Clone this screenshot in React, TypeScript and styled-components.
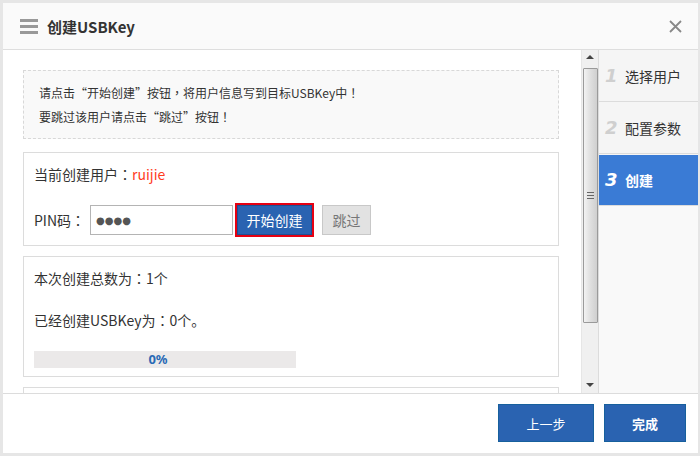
import React from "react";
import styled, { createGlobalStyle } from "styled-components";

const GlobalStyle = createGlobalStyle`
  html, body { margin: 0; padding: 0; background: #e6e6e6; }
  body { font-family: "Noto Sans CJK SC", "Microsoft YaHei", "Noto Sans", sans-serif; }
  * { box-sizing: border-box; }
`;

const Page = styled.div`
  width: 700px;
  height: 456px;
  padding: 3px 2px 3px 3px;
`;

const Dialog = styled.div`
  width: 100%;
  height: 100%;
  background: #fff;
  display: flex;
  flex-direction: column;
`;

const Header = styled.div`
  height: 47px;
  flex: none;
  background: #fafafa;
  border-bottom: 1px solid #dedede;
  display: flex;
  align-items: center;
  padding: 0 16px 0 17px;
`;

const Title = styled.div`
  margin-left: 9px;
  font-size: 15px;
  font-weight: 700;
  color: #333;
  flex: 1;
`;

const Body = styled.div`
  flex: 1;
  display: flex;
  min-height: 0;
`;

const Pane = styled.div`
  flex: 1;
  overflow: hidden;
  padding: 20px 22px 0 20px;
  display: flex;
  flex-direction: column;
`;

const Hint = styled.div`
  background: #f9f9f9;
  border: 1px dashed #d8d8d8;
  padding: 10px 15px 9px;
  font-size: 12px;
  line-height: 24px;
  color: #333;
  margin-bottom: 13px;
`;

/* centred full-width punctuation, as in the reference */
const Punct = styled.span`
  font-family: "Noto Sans CJK TC", "Noto Sans CJK SC", sans-serif;
`;

const Section = styled.div<{ $pt: number; $pb: number }>`
  border: 1px solid #dcdcdc;
  background: #fff;
  padding: ${(p) => p.$pt}px 10px ${(p) => p.$pb}px;
  margin-bottom: 10px;
  flex: none;
  font-size: 14px;
  color: #333;
`;

const Line = styled.div<{ $mt?: number }>`
  height: 20px;
  line-height: 20px;
  margin-top: ${(p) => p.$mt ?? 0}px;
`;

const Red = styled.span`
  color: #ff3c1e;
`;

const PinRow = styled.div`
  margin-top: 19px;
  display: flex;
  align-items: center;
  height: 34px;
`;

const PinLabel = styled.span`
  width: 56px;
`;

const PinInput = styled.div`
  width: 143px;
  height: 30px;
  border: 1px solid #b4b4b4;
  background: #fff;
  display: flex;
  align-items: center;
  padding-left: 5px;
  color: #555;
  font-size: 10px;
  letter-spacing: 0px;
  font-family: "DejaVu Sans", sans-serif;
`;

const StartBtn = styled.div`
  margin-left: 2px;
  width: 79px;
  height: 34px;
  border: 2px solid #e60012;
  background: #2a63b1;
  box-shadow: inset 0 0 0 1px #1d4f93;
  color: #fff;
  font-size: 14px;
  display: flex;
  align-items: center;
  justify-content: center;
`;

const SkipBtn = styled.div`
  margin-left: 8px;
  width: 49px;
  height: 30px;
  border: 1px solid #c8c8c8;
  background: #e2e2e2;
  color: #777;
  font-size: 14px;
  display: flex;
  align-items: center;
  justify-content: center;
`;

const Progress = styled.div`
  margin-top: 21px;
  width: 262px;
  height: 17px;
  padding-right: 14px;
  background: #ebe9e9;
  color: #2a6ab5;
  font-weight: 700;
  font-size: 13px;
  line-height: 17px;
  text-align: center;
  font-family: "Noto Sans", sans-serif;
`;

const Scrollbar = styled.div`
  width: 17px;
  flex: none;
  background: #f0f0f0;
  border-left: 1px solid #e6e6e6;
  display: flex;
  flex-direction: column;
  align-items: center;
  padding-top: 5px;
`;

const Arrow = styled.div<{ $down?: boolean }>`
  width: 0;
  height: 0;
  border-left: 4px solid transparent;
  border-right: 4px solid transparent;
  ${(p) =>
    p.$down
      ? "border-top: 4px solid #444; margin-top: auto; margin-bottom: 6px;"
      : "border-bottom: 4px solid #444; margin-bottom: 9px;"}
`;

const Thumb = styled.div`
  width: 15px;
  height: 255px;
  border: 1px solid #9a9a9a;
  border-radius: 1px;
  background: linear-gradient(to right, #f2f2f2 0%, #e2e2e2 40%, #cfcfcf 100%);
  display: flex;
  align-items: center;
  justify-content: center;
`;

const Grip = styled.div`
  width: 7px;
  height: 7px;
  background: repeating-linear-gradient(
    to bottom,
    #666 0px,
    #666 1px,
    transparent 1px,
    transparent 3px
  );
`;

const Steps = styled.div`
  width: 100px;
  flex: none;
  border-left: 1px solid #dcdcdc;
  background: #f9f9f9;
  display: flex;
  flex-direction: column;
`;

const Step = styled.div<{ $active?: boolean }>`
  height: 52px;
  border-bottom: 1px solid #dcdcdc;
  background: ${(p) => (p.$active ? "#3a7bd5" : "#f5f5f5")};
  box-shadow: ${(p) => (p.$active ? "inset 0 1px 0 #f5f5f5" : "none")};
  display: flex;
  align-items: center;
  padding-left: 6px;
  color: ${(p) => (p.$active ? "#fff" : "#333")};
  font-size: 14px;
  font-weight: ${(p) => (p.$active ? 700 : 400)};
`;

const Num = styled.span<{ $active?: boolean }>`
  width: 20px;
  font-family: "DejaVu Sans", sans-serif;
  font-style: italic;
  font-weight: 700;
  font-size: 18px;
  color: ${(p) => (p.$active ? "#fff" : "#cfcfcf")};
`;

const Footer = styled.div`
  height: 60px;
  flex: none;
  border-top: 1px solid #dcdcdc;
  display: flex;
  justify-content: flex-end;
  align-items: flex-start;
  gap: 10px;
  padding: 10px 12px 0 0;
`;

const FootBtn = styled.div<{ $w: number; $bold?: boolean }>`
  width: ${(p) => p.$w}px;
  height: 38px;
  background: #2a63b1;
  border: 1px solid #17609d;
  color: #fff;
  font-size: 13px;
  font-weight: ${(p) => (p.$bold ? 700 : 400)};
  display: flex;
  align-items: center;
  justify-content: center;
`;

const MenuIcon = () => (
  <svg width="18" height="15" viewBox="0 0 18 15">
    <rect x="0" y="0" width="18" height="3" fill="#999" />
    <rect x="0" y="6" width="18" height="3" fill="#999" />
    <rect x="0" y="12" width="18" height="3" fill="#999" />
  </svg>
);

const CloseIcon = () => (
  <svg width="13" height="13" viewBox="0 0 13 13">
    <path d="M1 1L12 12M12 1L1 12" stroke="#888" strokeWidth="1.8" />
  </svg>
);

export default function App() {
  return (
    <>
      <GlobalStyle />
      <Page>
        <Dialog>
          <Header>
            <MenuIcon />
            <Title>创建USBKey</Title>
            <CloseIcon />
          </Header>
          <Body>
            <Pane>
              <Hint>
                <div>
                  请点击“开始创建”按钮<Punct>，</Punct>将用户信息写到目标USBKey中<Punct>！</Punct>
                </div>
                <div>
                  要跳过该用户请点击“跳过”按钮<Punct>！</Punct>
                </div>
              </Hint>
              <Section $pt={11} $pb={8}>
                <Line>
                  当前创建用户<Punct>：</Punct>
                  <Red>ruijie</Red>
                </Line>
                <PinRow>
                  <PinLabel>
                    PIN码<Punct>：</Punct>
                  </PinLabel>
                  <PinInput>●●●●</PinInput>
                  <StartBtn>开始创建</StartBtn>
                  <SkipBtn>跳过</SkipBtn>
                </PinRow>
              </Section>
              <Section $pt={11} $pb={8}>
                <Line>
                  本次创建总数为<Punct>：</Punct>1个
                </Line>
                <Line $mt={22}>
                  已经创建USBKey为<Punct>：</Punct>0个。
                </Line>
                <Progress>0%</Progress>
              </Section>
              <Section $pt={11} $pb={8}>
                <Line />
              </Section>
            </Pane>
            <Scrollbar>
              <Arrow />
              <Thumb>
                <Grip />
              </Thumb>
              <Arrow $down />
            </Scrollbar>
            <Steps>
              <Step>
                <Num>1</Num>选择用户
              </Step>
              <Step>
                <Num>2</Num>配置参数
              </Step>
              <Step $active>
                <Num $active>3</Num>创建
              </Step>
            </Steps>
          </Body>
          <Footer>
            <FootBtn $w={96}>上一步</FootBtn>
            <FootBtn $w={82} $bold>
              完成
            </FootBtn>
          </Footer>
        </Dialog>
      </Page>
    </>
  );
}
